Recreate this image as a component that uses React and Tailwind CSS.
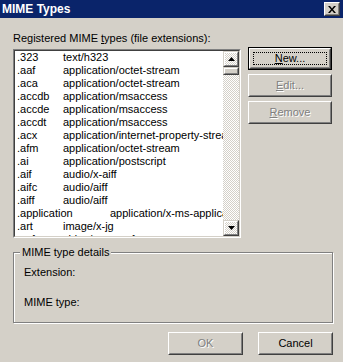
import React from 'react';

const rows = [
    ['.323', 'text/h323'],
    ['.aaf', 'application/octet-stream'],
    ['.aca', 'application/octet-stream'],
    ['.accdb', 'application/msaccess'],
    ['.accde', 'application/msaccess'],
    ['.accdt', 'application/msaccess'],
    ['.acx', 'application/internet-property-stream'],
    ['.afm', 'application/octet-stream'],
    ['.ai', 'application/postscript'],
    ['.aif', 'audio/x-aiff'],
    ['.aifc', 'audio/aiff'],
    ['.aiff', 'audio/aiff'],
    ['.application', 'application/x-ms-application', true],
    ['.art', 'image/x-jg'],
    ['.asf', 'video/x-ms-asf'],
];

const ScrollBtn = ({ down }) => (
    <div className="h-[16px] border border-t-[#d4d0c8] border-l-[#d4d0c8] border-r-[#404040] border-b-[#404040]">
        <div className="h-full border border-t-white border-l-white border-r-[#808080] border-b-[#808080] flex items-center justify-center">
            <svg width="7" height="4" viewBox="0 0 7 4">
                {down ? <path d="M0 0h7L3.5 4z" fill="#000" /> : <path d="M0 4h7L3.5 0z" fill="#000" />}
            </svg>
        </div>
    </div>
);

const Button = ({ children, disabled, isDefault, className = '' }) => (
    <div className={`h-[23px] ${isDefault ? 'border border-black' : ''} ${className}`}>
        <div className="h-full border border-t-white border-l-white border-r-[#404040] border-b-[#404040]">
            <div className="h-full border border-t-[#d4d0c8] border-l-[#d4d0c8] border-r-[#808080] border-b-[#808080] flex items-center justify-center p-[2px]">
                <div className={`w-full h-full flex items-center justify-center ${isDefault ? 'border border-dotted border-black' : ''} ${disabled ? 'text-[#808080] [text-shadow:1px_1px_0_#fff]' : ''}`}>
                    {children}
                </div>
            </div>
        </div>
    </div>
);

export default function App() {
    return (
        <div className="w-[343px] h-[362px] bg-[#d4d0c8] flex flex-col font-['Liberation_Sans',Arial,sans-serif] text-[11px] leading-[13px] text-black overflow-hidden">
            {/* Title bar */}
            <div className="h-[18px] shrink-0 bg-[#0a246a] flex items-center justify-between pl-[2px] pr-[3px]">
                <span className="text-white font-bold text-[12px]">MIME Types</span>
                <div className="w-[16px] h-[14px] border border-t-white border-l-white border-r-[#404040] border-b-[#404040] bg-[#d4d0c8]">
                    <div className="h-full border border-t-[#d4d0c8] border-l-[#d4d0c8] border-r-[#808080] border-b-[#808080] flex items-center justify-center">
                        <svg width="8" height="7" viewBox="0 0 8 7">
                            <path d="M0 0h2l2 2.5L6 0h2L5 3.5 8 7H6L4 4.5 2 7H0l3-3.5z" fill="#000" />
                        </svg>
                    </div>
                </div>
            </div>

            <div className="flex-1 flex flex-col pl-[13px] pr-[10px] pt-[14px]">
                <div className="flex">
                    {/* List */}
                    <div className="w-[228px]">
                        <div className="h-[17px]">Registered MIME <u>t</u>ypes (file extensions):</div>
                        <div className="h-[189px] border border-t-[#808080] border-l-[#808080] border-r-white border-b-white">
                            <div className="h-full border border-t-[#404040] border-l-[#404040] border-r-[#d4d0c8] border-b-[#d4d0c8] flex bg-white">
                                <div className="flex-1 overflow-hidden pl-[2px]">
                                    {rows.map(([ext, type, wide]) => (
                                        <div key={ext} className="flex h-[13px] whitespace-nowrap">
                                            <span className={wide ? 'w-[93px] shrink-0' : 'w-[46px] shrink-0'}>{ext}</span>
                                            <span>{type}</span>
                                        </div>
                                    ))}
                                </div>
                                <div className="w-[16px] flex flex-col bg-[repeating-conic-gradient(#ffffff_0_25%,#d4d0c8_0_50%)] bg-[length:2px_2px]">
                                    <ScrollBtn />
                                    <div className="h-[8px] bg-[#d4d0c8] border border-t-[#d4d0c8] border-l-[#d4d0c8] border-r-[#404040] border-b-[#404040]">
                                        <div className="h-full border border-t-white border-l-white border-r-[#808080] border-b-[#808080]" />
                                    </div>
                                    <div className="flex-1" />
                                    <ScrollBtn down />
                                </div>
                            </div>
                        </div>
                    </div>

                    {/* Side buttons */}
                    <div className="ml-[7px] w-[84px] pt-[15px] flex flex-col gap-[4px]">
                        <Button isDefault><span><u>N</u>ew...</span></Button>
                        <Button disabled><span><u>E</u>dit...</span></Button>
                        <Button disabled><span><u>R</u>emove</span></Button>
                    </div>
                </div>

                {/* Details group */}
                <fieldset className="mt-[8px] border border-[#808080] shadow-[1px_1px_0_#fff,inset_1px_1px_0_#fff] px-0 pt-[7px] pb-[13px]">
                    <legend className="ml-[6px] px-[2px] bg-[#d4d0c8]">MIME type details</legend>
                    <div className="pl-[10px] flex flex-col gap-[17px]">
                        <div>Extension:</div>
                        <div>MIME type:</div>
                    </div>
                </fieldset>

                {/* Dialog buttons */}
                <div className="mt-[9px] flex justify-end gap-[15px]">
                    <Button disabled className="w-[75px]">OK</Button>
                    <Button className="w-[75px]">Cancel</Button>
                </div>
            </div>
        </div>
    );
}
